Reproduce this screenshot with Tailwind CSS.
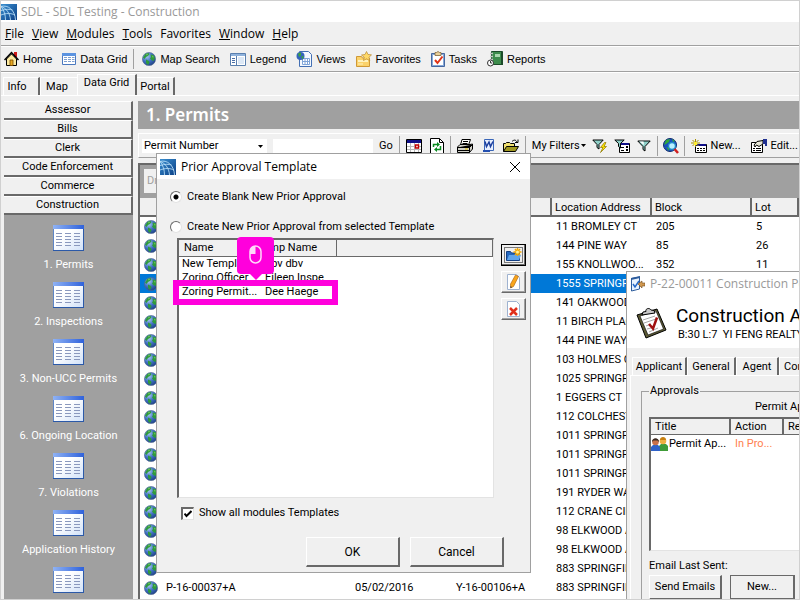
<!DOCTYPE html>
<html lang="en">
<head>
    <meta charset="UTF-8">
    <meta name="viewport" content="width=device-width, initial-scale=1.0">
    <title>SDL - SDL Testing - Construction</title>
    <!-- Tailwind CSS -->
    <script src="https://cdn.jsdelivr.net/npm/@tailwindcss/browser@4"></script>
</head>
<body class="bg-[#f0f0f0] text-black text-[11px] leading-[14px] font-['Roboto',sans-serif]">

    <!-- Shared icons -->
    <svg class="absolute w-0 h-0">
        <defs>
            <linearGradient id="sky" x1="0" y1="0" x2="1" y2="1"><stop offset="0" stop-color="#3a8fd0"/><stop offset="1" stop-color="#0b3f86"/></linearGradient>
            <radialGradient id="sea" cx=".35" cy=".3" r=".8"><stop offset="0" stop-color="#a9c8ee"/><stop offset=".5" stop-color="#3f70c4"/><stop offset="1" stop-color="#1c3c7c"/></radialGradient>
            <linearGradient id="sheet" x1="0" y1="0" x2="1" y2="1"><stop offset=".4" stop-color="#fff"/><stop offset="1" stop-color="#cfe0f8"/></linearGradient>
            <linearGradient id="bar" x1="0" y1="0" x2="1" y2="0"><stop offset="0" stop-color="#8fb2f4"/><stop offset="1" stop-color="#2f62dc"/></linearGradient>
        </defs>
        <symbol id="logo" viewBox="0 0 16 16">
            <path fill="url(#sky)" d="M0 0h16v16H0z"/>
            <g fill="none" stroke="#b4dbf6" stroke-width=".9"><path d="M0 2.5C7 .5 14 6 14.500 16M0 2.500C5 4 9 9 9.500 16M0 2.500C3 6 4.500 11 4.500 16M0 6.500C5 5 9 5 11.500 6M0 11C5 9 10 9 14 11"/></g>
        </symbol>
        <symbol id="globe" viewBox="0 0 14 14">
            <circle cx="7" cy="7" r="6.600" fill="url(#sea)" stroke="#51688f" stroke-width=".6"/>
            <path fill="#2f9a3c" d="M3.500 1.800 6.500 1l1 1-1.500 2L4 5 2.500 7 1 5.500zM8.500 2.500l3 .5L13 6l-1.500 3L10 8.500 8 6.500l1-1.500zM4 7.500l3 1.500.5 1.500L6 13l-2-2z"/>
            <path fill="#8ed56a" d="m4 2.500 2-.8L5 3.500zM10 3.500l1.500 1-.5 1.500z"/>
        </symbol>
        <symbol id="datagrid" viewBox="0 0 31 26">
            <path fill="url(#sheet)" stroke="#5f86c6" d="M.5.500h30v25H.5z"/>
            <path fill="url(#bar)" d="M0 0h31v4H0z"/><path fill="#2b59a8" d="M0 25h31v1H0zM30 4h1v22h-1z"/>
            <path stroke="#8a98bd" d="M3 8.500h6M12 8.500h6M21 8.500h6M3 11.500h6M12 11.500h6M21 11.500h6M3 14.500h6M12 14.500h6M21 14.500h6M3 17.500h6M12 17.500h6M21 17.500h6M3 20.500h6M12 20.500h6M21 20.500h6"/>
        </symbol>
        <symbol id="arrow" viewBox="0 0 5 3"><path d="M0 0h5L2.500 3z"/></symbol>
        <symbol id="funnel" viewBox="0 0 14 12"><path fill="#8fd0c8" stroke="#000" d="M.8 1h12.400L8 6.500V11l-2-1.500v-3z"/><path fill="#fff" d="M2.500 1.600h4L7 5z"/></symbol>
    </svg>

    <div class="relative flex flex-col h-screen overflow-hidden border border-[#d0d0d0]">

        <!-- Title bar -->
        <div class="flex items-center gap-1 h-[21px] shrink-0 bg-white text-[#999] text-xs font-['Open_Sans',sans-serif]">
            <svg class="w-4 h-4"><use href="#logo"/></svg>
            <span>SDL - SDL Testing - Construction</span>
        </div>

        <!-- Menu -->
        <nav class="flex items-center gap-2 h-[24px] px-1 shrink-0 border-b border-[#a0a0a0] text-xs font-['Open_Sans',sans-serif]">
            <a href="#"><u>F</u>ile</a>
            <a href="#"><u>V</u>iew</a>
            <a href="#"><u>M</u>odules</a>
            <a href="#"><u>T</u>ools</a>
            <a href="#">Favorites</a>
            <a href="#"><u>W</u>indow</a>
            <a href="#"><u>H</u>elp</a>
        </nav>

        <!-- Toolbar -->
        <div class="flex items-center gap-[10px] h-[26px] px-[3px] shrink-0 border-t border-t-white border-b border-b-[#a0a0a0] font-['Liberation_Sans',sans-serif]">
            <button class="flex items-center gap-1">
                <svg class="w-[15px] h-4" viewBox="0 0 15 16"><path fill="#d01818" d="M10 1h3v5h-3z"/><path fill="#fbe9a0" stroke="#000" d="M2.500 8v6.500h10V8L7.500 3z"/><path fill="none" stroke="#000" stroke-width="1.500" d="M.5 9 7.500 1.500l7 7.500"/><path fill="#e8a820" stroke="#7a4a00" stroke-width=".8" d="M6 9h3v5.500H6z"/></svg>
                Home
            </button>
            <button class="flex items-center gap-1">
                <svg class="w-[14px] h-3" viewBox="0 0 14 12"><path fill="#fff" stroke="#4a78bf" d="M.5.500h13v11H.5z"/><path fill="#5b93e0" d="M0 0h14v3H0z"/><path stroke="#7d9fd0" d="M2 4.500h3M6 4.500h3M10 4.500h2.500M2 6.500h3M6 6.500h3M10 6.500h2.500M2 8.500h3M6 8.500h3M10 8.500h2.500"/></svg>
                Data Grid
            </button>
            <div class="w-px h-5 bg-[#a0a0a0] -ml-1 -mr-[2px]"></div>
            <button class="flex items-center gap-1"><svg class="w-[14px] h-[14px]"><use href="#globe"/></svg>Map Search</button>
            <button class="flex items-center gap-1">
                <svg class="w-4 h-[13px]" viewBox="0 0 16 13"><path fill="#fff" stroke="#5a7fae" d="M.5.500h15v12H.5z"/><path fill="#8fb2dc" d="M1 1h14v2H1z"/><path stroke="#5a7fae" d="M6.500 3v10"/><path stroke="#4b6ea6" d="M2 5.500h3M2 7.500h3M2 9.500h3"/><path fill="#dce8f6" d="M8 4h6v7H8z"/></svg>
                Legend
            </button>
            <button class="flex items-center gap-1">
                <svg class="w-4 h-4" viewBox="0 0 16 16"><path fill="#f4f9ff" stroke="#4470b4" d="M3.500.500h9l3 3v12h-12z"/><path fill="#fff" stroke="#7fa4d8" d="M6.500 7.500h7v6h-7zM9 7.500v6M11.500 7.500v6M6.500 10.500h7"/><circle cx="4.500" cy="5" r="4" fill="#3464bd"/><path fill="#3fa53f" d="M2 2.500 5 1.500v3L3 6zM5.500 5l2.500.5L6 8.500z"/></svg>
                Views
            </button>
            <button class="flex items-center gap-1">
                <svg class="w-4 h-4" viewBox="0 0 16 16"><path fill="#fbd26a" stroke="#cf9836" d="M.5 5.500h5l1 1.500h7v8.500H.5z"/><path fill="#fff2bd" d="M2 9h10v2H2zM2 12.500h5v1H2z"/><path fill="#ffd968" stroke="#b98a35" stroke-width=".7" d="m10.500.500 1.500 3 3.500.3-2.500 2.500.8 3.200-3.300-1.700-3 1.700.8-3.200L5.500 4l3.500-.5z"/></svg>
                Favorites
            </button>
            <button class="flex items-center gap-1">
                <svg class="w-[14px] h-4" viewBox="0 0 14 16"><path fill="#86a8d8" stroke="#45679f" d="M.5 2.500h13v13H.5z"/><path fill="#fff" d="M2 4h10v10H2z"/><path fill="#e8cf9a" stroke="#80663a" stroke-width=".8" d="M4 1.500h1.500L7 .5l1.500 1H10v3H4z"/><path fill="none" stroke="#e03318" stroke-width="2" d="m4 9 2.500 3L11.500 5.500"/></svg>
                Tasks
            </button>
            <button class="flex items-center gap-1">
                <svg class="w-4 h-4" viewBox="0 0 16 16"><path fill="#3d8c4c" stroke="#1b4b29" d="M4.500.500h11v13h-11z"/><path fill="#a9d7ad" d="M8 3h5v3H8z"/><path fill="#1b4b29" d="M14 1h2v13h-2z"/><path stroke="#c8c8c8" stroke-width="1.500" d="M3 2.500h3M3 5.500h3M3 8.500h3"/><circle cx="3.500" cy="12" r="3" fill="#fff" stroke="#333"/><path fill="none" stroke="#333" d="M3.500 10v2H5"/></svg>
                Reports
            </button>
        </div>

        <!-- View tabs -->
        <div class="flex items-end h-[24px] shrink-0 border-t border-t-white border-b border-b-white">
            <button class="h-[18px] w-[37px] ml-[2px] pr-2 border-t border-l border-white border-r-2 border-r-[#696969]">Info</button>
            <button class="h-[18px] w-[37px] pr-1 border-t border-l border-white">Map</button>
            <button class="h-[21px] w-[60px] pb-1 border-t border-l border-white border-r-2 border-r-[#696969]">Data Grid</button>
            <button class="h-[18px] w-[38px] border-t border-white border-r-2 border-r-[#696969]">Portal</button>
        </div>

        <div class="flex flex-1 min-h-0 pt-[5px] pl-[3px] gap-[5px]">

            <!-- Sidebar -->
            <aside class="flex flex-col w-[129px] shrink-0 bg-[#a0a0a0]">
                <button class="h-[19px] shrink-0 bg-[#f0f0f0] border-t border-white border-b-2 border-r-2 border-b-[#696969] border-r-[#696969]">Assessor</button>
                <button class="h-[19px] shrink-0 bg-[#f0f0f0] border-t border-white border-b-2 border-r-2 border-b-[#696969] border-r-[#696969]">Bills</button>
                <button class="h-[19px] shrink-0 bg-[#f0f0f0] border-t border-white border-b-2 border-r-2 border-b-[#696969] border-r-[#696969]">Clerk</button>
                <button class="h-[19px] shrink-0 bg-[#f0f0f0] border-t border-white border-b-2 border-r-2 border-b-[#696969] border-r-[#696969]">Code Enforcement</button>
                <button class="h-[19px] shrink-0 bg-[#f0f0f0] border-t border-white border-b-2 border-r-2 border-b-[#696969] border-r-[#696969]">Commerce</button>
                <button class="h-[19px] shrink-0 bg-[#f0f0f0] border-t border-white border-b-2 border-r-2 border-b-[#696969] border-r-[#696969]">Construction</button>
                <div class="flex flex-col gap-[10px] pt-[10px] text-white">
                    <button class="flex flex-col items-center gap-[7px]"><svg class="w-[31px] h-[26px]"><use href="#datagrid"/></svg>1. Permits</button>
                    <button class="flex flex-col items-center gap-[7px]"><svg class="w-[31px] h-[26px]"><use href="#datagrid"/></svg>2. Inspections</button>
                    <button class="flex flex-col items-center gap-[7px]"><svg class="w-[31px] h-[26px]"><use href="#datagrid"/></svg>3. Non-UCC Permits</button>
                    <button class="flex flex-col items-center gap-[7px]"><svg class="w-[31px] h-[26px]"><use href="#datagrid"/></svg>6. Ongoing Location</button>
                    <button class="flex flex-col items-center gap-[7px]"><svg class="w-[31px] h-[26px]"><use href="#datagrid"/></svg>7. Violations</button>
                    <button class="flex flex-col items-center gap-[7px]"><svg class="w-[31px] h-[26px]"><use href="#datagrid"/></svg>Application History</button>
                    <button class="flex flex-col items-center" aria-label="More"><svg class="w-[31px] h-[26px]"><use href="#datagrid"/></svg></button>
                </div>
            </aside>

            <main class="flex flex-col flex-1 min-w-0">
                <h1 class="h-7 shrink-0 px-2 bg-[#a0a0a0] text-white text-[17px] leading-7 font-semibold font-['Noto_Sans',sans-serif]">1. Permits</h1>

                <!-- Grid toolbar -->
                <div class="flex items-center h-[25px] mt-1 pl-[3px] shrink-0 border-t border-l border-white border-b border-b-[#a0a0a0] whitespace-nowrap overflow-hidden">
                    <div class="relative shrink-0">
                        <select aria-label="Search field" class="block appearance-none w-[125px] h-[14px] px-[2px] bg-white">
                            <option>Permit Number</option>
                        </select>
                        <svg class="absolute right-1 top-[6px] w-[5px] h-[3px] pointer-events-none"><use href="#arrow"/></svg>
                    </div>
                    <input type="text" aria-label="Search" class="w-[100px] h-[14px] ml-[6px] bg-white">
                    <button class="mx-[6px]">Go</button>
                    <div class="w-px h-5 bg-[#a0a0a0]"></div>
                    <div class="flex items-center gap-2 px-[6px]">
                        <button aria-label="Calendar"><svg class="block w-4 h-[14px]" viewBox="0 0 16 14"><path fill="#fff" stroke="#000" d="M.5.500h15v13H.5z"/><path fill="#101088" d="M1 1h14v3H1z"/><path stroke="#b8b8b8" d="M4.500 4v9M8.500 4v9M12.500 4v9M1 7.500h14M1 10.500h14"/><path fill="#fff" stroke="#c00000" stroke-width="1.500" d="M9.500 6h3v3h-3z"/></svg></button>
                        <button aria-label="Refresh"><svg class="block w-[14px] h-4" viewBox="0 0 14 16"><path fill="#fff" stroke="#000" d="M.5.500h9l4 4v11H.5z"/><path fill="none" stroke="#000" d="M9.500.500v4h4"/><path fill="none" stroke="#0a8a20" stroke-width="1.500" d="M3.500 9V6.500H8M10.500 8v3.500H6"/><path fill="#0a8a20" d="m7 4 3 2.500L7 9zM7 9v5l-3-2.500z"/></svg></button>
                    </div>
                    <div class="w-px h-5 bg-[#a0a0a0]"></div>
                    <div class="flex items-center gap-2 px-[6px]">
                        <button aria-label="Print"><svg class="block w-4 h-[14px]" viewBox="0 0 16 14"><path fill="#fff" stroke="#000" d="M5 .5h8.500L11.500 6h-8z"/><path stroke="#000" d="M6 2.500h5M5.500 4.500h5"/><path fill="#d0d0c8" stroke="#000" d="m.5 8 2.500-2.500h10L15.500 5v5l-3 3.500H.5z"/><path stroke="#000" d="M.5 8.500h12l3-3M12.500 8.500v5M.5 11.500h12"/><path stroke="#e0c000" d="M8 10h3"/></svg></button>
                        <button aria-label="Word"><svg class="block w-[14px] h-4" viewBox="0 0 14 16"><path fill="#e8f0ff" stroke="#3a66b8" d="M3.500 1.500h9v11h-9z"/><path fill="none" stroke="#1c3f9e" stroke-width="1.500" d="m4 3.500 1.500 5L8 4l1.500 4.500 2.500-5"/><path fill="#2450b0" d="M2 12h7v2H2z"/></svg></button>
                        <button aria-label="Open"><svg class="block w-4 h-[14px]" viewBox="0 0 16 14"><path fill="#f0e070" stroke="#000" d="M.5 12.500v-8h2l1-1h3l1 1h4v3"/><path fill="#a09820" stroke="#000" d="m.5 12.500 3-5h12l-3 5z"/><path fill="none" stroke="#000" d="M9 2.500c2-2 4-2 5 1M12 3.500h3v-3"/></svg></button>
                    </div>
                    <div class="w-px h-5 bg-[#a0a0a0]"></div>
                    <button class="flex items-center gap-px ml-[6px]">My Filters<svg class="w-[5px] h-[3px]"><use href="#arrow"/></svg></button>
                    <div class="flex items-center gap-[7px] px-[6px]">
                        <button aria-label="Quick filter"><svg class="block w-[15px] h-[14px]" viewBox="0 0 15 14"><path fill="#8fd0c8" stroke="#000" d="M.8 1h10.400L7 5.500V10L5 8.500v-3z"/><path fill="#ffe600" stroke="#8a7400" stroke-width=".7" d="m12.500 3.500-4 5h2.500L8.500 13.500l6-6H12l2-4z"/></svg></button>
                        <button aria-label="Filter form"><svg class="block w-4 h-[14px]" viewBox="0 0 16 14"><path fill="#fff" stroke="#000" d="M5.500 4.500h10v9h-10z"/><path fill="#101088" d="M6 4h9v2H6z"/><path fill="#000" d="M7 8h3v1H7zM12 7h2v2h-2zM7 11h3v1H7zM12 10h2v2h-2z"/><path fill="#8fd0c8" stroke="#000" d="M.8 1h9.400L6.500 4.500V9l-2-1.500v-3z"/></svg></button>
                        <button aria-label="Filter"><svg class="block w-[14px] h-3"><use href="#funnel"/></svg></button>
                    </div>
                    <div class="w-px h-5 bg-[#a0a0a0]"></div>
                    <button aria-label="Find on map" class="mx-[5px]"><svg class="block w-4 h-4" viewBox="0 0 16 16"><circle cx="7" cy="7" r="6.500" fill="#1a50c0" stroke="#102a70"/><path fill="#30a838" d="M3 2 7 1 6 4 3 6 1 7zM3 9l3 1v3zM9 1l3 2-2 1z"/><circle cx="9" cy="8" r="3.500" fill="#b8f0ff" stroke="#2088c8" stroke-width="1.500"/><path stroke="#d02020" stroke-width="2.500" d="m11.500 11 3.500 4"/></svg></button>
                    <div class="w-px h-5 bg-[#a0a0a0]"></div>
                    <button class="flex items-center gap-1 ml-[6px]">
                        <svg class="w-4 h-[14px]" viewBox="0 0 16 14"><path fill="#fff" stroke="#000" d="M4.500 5.500h11v8h-11z"/><path fill="#101088" d="M5 5h10v2H5z"/><path stroke="#000" d="M6 9.500h2M9 9.500h2M12 9.500h2M6 11.500h2M9 11.500h2M12 11.500h2"/><path stroke="#a89000" d="M4.500 0v8M0 4h9M1.500 1l6 6M7.500 1l-6 6"/><path fill="#ffee30" d="M3 3h3v3H3z"/></svg>
                        New...
                    </button>
                    <button class="flex items-center gap-1 ml-[10px]">
                        <svg class="w-4 h-[14px]" viewBox="0 0 16 14"><path fill="#fff" stroke="#000" d="M.5 3.500h11v10H.5z"/><path stroke="#000" d="M2 9.500h2M5 9.500h5M2 11.500h2M5 11.500h5"/><path fill="#e8e8d8" stroke="#000" d="m3 6 3-3.500 6-1V5L8 7.500 5.500 6 4 8z"/><path fill="#203090" d="M12 0h4v7h-2V5h-2z"/></svg>
                        Edit...
                    </button>
                </div>

                <!-- Permits grid -->
                <div class="flex-1 min-h-0 mt-[5px] overflow-hidden bg-white border-t-2 border-l-2 border-[#696969]">
                    <div class="h-[33px] p-1 bg-[#a0a0a0]">
                        <div class="inline-block h-6 px-[3px] leading-6 bg-[#f0f0f0] text-[#a0a0a0]">Drag a column header here</div>
                    </div>
                    <table class="w-full table-fixed border-separate border-spacing-0">
                        <colgroup>
                            <col class="w-[211px]"><col class="w-[101px]"><col class="w-[100px]"><col class="w-[100px]"><col class="w-[100px]"><col>
                        </colgroup>
                        <thead>
                            <tr class="h-[19px] bg-[#f0f0f0] text-left *:font-normal *:p-0 *:pt-[2px] *:pl-[3px] *:border-b-2 *:border-r-2 *:border-[#696969]">
                                <th></th><th></th><th></th><th>Location Address</th><th>Block</th><th>Lot</th>
                            </tr>
                        </thead>
                        <tbody id="permitRows"></tbody>
                    </table>
                </div>
            </main>
        </div>

        <!-- Construction permit window -->
        <section class="absolute left-[625px] top-[270px] right-0 bottom-0 flex flex-col overflow-hidden bg-[#f0f0f0] border-t border-l border-[#a0a0a0] whitespace-nowrap">
            <div class="h-[76px] shrink-0 bg-white">
                <div class="flex items-center gap-[5px] h-6 pl-[3px] text-[#999] text-xs font-['Open_Sans',sans-serif]">
                    <svg class="w-[15px] h-4 shrink-0" viewBox="0 0 15 16"><path fill="#e8f3ff" stroke="#2d5c9c" d="m1.500 2.500 8-1.500v12l-8 2z"/><path fill="#2d5c9c" d="m1 2 9-2v2L1 4z"/><path fill="none" stroke="#2468c8" stroke-width="1.500" d="m3 8 2 3 4-6"/><path fill="#d09850" stroke="#704818" stroke-width=".6" d="m8 8 4-3v2h3v3h-3v2z"/></svg>
                    <span>P-22-00011 Construction Permit</span>
                </div>
                <div class="flex gap-2 pl-[9px] pt-2">
                    <svg class="w-8 h-8 mt-[3px] shrink-0" viewBox="0 0 32 32"><path fill="#5c5a34" stroke="#000" d="m1 8 20-6 9 21-20 8z"/><path fill="#fff" stroke="#000" stroke-width=".6" d="m4 9 16-5 7.500 18L12 28z"/><path stroke="#a8a8a8" d="m7 13 12-4M8 16l12-4M10 19l5-2M11 22l4-1M13 25l9-4"/><path fill="#c8c8c8" stroke="#000" d="m6 8 1-3 3-.5C9 2 13 0 15 3l3 .5L19 6z"/><path fill="none" stroke="#a01010" stroke-width="2.500" d="m13 17 4 4.500 4-11"/></svg>
                    <div>
                        <h2 class="text-[19px] leading-6">Construction Approval</h2>
                        <p class="pl-[2px]">B:30 L:7&nbsp; YI FENG REALTY</p>
                    </div>
                </div>
            </div>
            <div class="flex mt-[9px] pl-[5px] shrink-0">
                <button class="h-[18px] w-[55px] shrink-0 border-t border-l border-white border-r-2 border-r-[#696969]">Applicant</button>
                <button class="h-[18px] w-[49px] shrink-0 border-t border-l border-white border-r-2 border-r-[#696969]">General</button>
                <button class="h-[18px] w-[43px] shrink-0 border-t border-l border-white border-r-2 border-r-[#696969]">Agent</button>
                <button class="h-[18px] w-[70px] shrink-0 pl-1 text-left border-t border-l border-white">Contractor</button>
            </div>
            <div class="flex-1 min-h-0 ml-[3px] pt-2 pl-[10px] border-t border-l border-white">
                <fieldset class="relative h-full min-w-0 pl-[7px] border-l border-t border-[#a0a0a0]">
                    <legend class="px-px">Approvals</legend>
                    <p class="pl-[106px] pt-[2px]">Permit Approval</p>
                    <div class="h-[134px] mt-[3px] bg-white border-t-2 border-l-2 border-[#696969] border-b border-b-[#e3e3e3]">
                        <table class="table-fixed border-separate border-spacing-0 w-[200px]">
                            <colgroup><col class="w-[80px]"><col class="w-[53px]"><col></colgroup>
                            <thead>
                                <tr class="h-[16px] bg-[#f0f0f0] text-left *:font-normal *:p-0 *:pl-1 *:border-b *:border-r-2 *:border-[#696969]"><th>Title</th><th>Action</th><th>Received</th></tr>
                            </thead>
                            <tbody>
                                <tr class="h-[18px] *:p-0">
                                    <td><div class="flex items-center gap-px">
                                        <svg class="w-[17px] h-[14px] shrink-0" viewBox="0 0 17 14"><path fill="#3f9c38" d="M8 14V9l2-2h5l2 2v5z"/><circle cx="12" cy="4" r="3.300" fill="#f0b040"/><path fill="#c88010" d="M9 3c0-4 6-4 6 0z"/><path fill="#2f62c8" d="M0 14v-4l2-2h5l2 2v4z"/><circle cx="4.500" cy="5" r="3.300" fill="#c87048"/><path fill="#3a2a22" d="M1 5c0-5 7-5 7 0L6.500 3.500h-4z"/></svg>Permit Ap...
                                    </div></td>
                                    <td class="text-[#ff7f50]"><span class="pl-1">In Pro...</span></td>
                                    <td></td>
                                </tr>
                            </tbody>
                        </table>
                    </div>
                    <p class="mt-2">Email Last Sent:</p>
                    <div class="flex gap-2 mt-[2px]">
                        <button class="w-[73px] h-[25px] shrink-0 border border-white border-r-2 border-b-2 border-r-[#696969] border-b-[#696969]">Send Emails</button>
                        <button class="w-[65px] h-[25px] shrink-0 border border-[#696969] border-r-2 border-b-2">New...</button>
                    </div>
                </fieldset>
            </div>
        </section>

        <!-- Prior approval template dialog -->
        <section role="dialog" aria-labelledby="dialogTitle" class="absolute left-[155px] top-[152px] w-[375px] bg-[#f0f0f0] border border-[#a0a0a0]">
            <div class="flex items-center gap-[5px] h-[25px] pl-[3px] pr-[9px] bg-white text-xs font-['Open_Sans',sans-serif]">
                <svg class="w-4 h-4"><use href="#logo"/></svg>
                <h2 id="dialogTitle" class="flex-1">Prior Approval Template</h2>
                <button aria-label="Close"><svg class="block w-3 h-3" viewBox="0 0 12 12"><path stroke="#000" d="m1 1 10 10M11 1 1 11"/></svg></button>
            </div>
            <div class="pt-[11px] pl-[13px] pr-1">
                <label class="flex items-center gap-[5px]">
                    <input type="radio" name="source" checked class="appearance-none w-3 h-3 rounded-full border border-[#696969] border-r-[#e3e3e3] border-b-[#e3e3e3] bg-white checked:bg-[radial-gradient(circle,#000_2px,#fff_3px)]">
                    Create Blank New Prior Approval
                </label>
                <label class="flex items-center gap-[5px] mt-4">
                    <input type="radio" name="source" class="appearance-none w-3 h-3 rounded-full border border-[#696969] border-r-[#e3e3e3] border-b-[#e3e3e3] bg-white checked:bg-[radial-gradient(circle,#000_2px,#fff_3px)]">
                    Create New Prior Approval from selected Template
                </label>
                <div class="flex gap-[7px] mt-1 pl-[7px]">
                    <div class="relative flex-1 h-[260px] bg-white border-t-2 border-l-2 border-[#696969] border-r border-r-[#e3e3e3] border-b border-b-[#e3e3e3]">
                        <table class="w-full table-fixed border-separate border-spacing-0">
                            <colgroup><col class="w-[79px]"><col class="w-[79px]"><col></colgroup>
                            <thead>
                                <tr class="h-[17px] bg-[#f0f0f0] text-left *:font-normal *:p-0 *:pl-[5px] *:border-b *:border-r *:border-[#696969]"><th>Name</th><th>Emp Name</th><th></th></tr>
                            </thead>
                            <tbody class="whitespace-nowrap *:h-[14px]">
                                <tr class="*:p-0 *:pl-[3px]"><td>New Templa...</td><td><span class="pl-1">dbv dbv</span></td><td></td></tr>
                                <tr class="*:p-0 *:pl-[3px]"><td>Zoring Officer</td><td><span class="pl-1">Eileen Inspe</span></td><td></td></tr>
                                <tr class="*:p-0 *:pl-[3px]"><td>Zoring Permit...</td><td><span class="pl-1">Dee Haege</span></td><td></td></tr>
                            </tbody>
                        </table>
                        <!-- Click callout -->
                        <div class="absolute -left-[6px] top-[40px] w-[165px] h-[25px] border-6 border-[#ff00dc]"></div>
                        <div class="absolute left-[58px] -top-[3px] flex justify-center w-[37px] h-[37px] pt-2 rounded-[4px] bg-[#ff00dc]">
                            <svg class="w-[13px] h-[19px]" viewBox="0 0 13 19"><rect x="1" y="1" width="11" height="17" rx="5.500" fill="none" stroke="#ffd9fa" stroke-width="1.500"/><path fill="#ffd9fa" d="M6.500 1v8H1V6.500C1 3 3 1 6.500 1z"/></svg>
                            <svg class="absolute top-[37px] w-3 h-[6px]" viewBox="0 0 12 6"><path fill="#ff00dc" d="M0 0h12L6 6z"/></svg>
                        </div>
                    </div>
                    <div class="flex flex-col gap-[5px] pt-[6px]">
                        <button aria-label="New template" class="flex items-center justify-center w-[25px] h-[22px] border border-black shadow-[inset_-1px_-1px_0_#696969]">
                            <svg class="w-[19px] h-4" viewBox="0 0 19 16"><path fill="none" stroke="#000" stroke-dasharray="1 1" d="M.5.500h18v15H.5z"/><path fill="#2468c0" stroke="#123f84" d="M2.500 4.500h4l1 1.500h8v7.500h-13z"/><path fill="#5ea4ec" d="m3 13 2-5h12l-2 5z"/><path stroke="#f5a800" stroke-width="1.500" d="M13.500 1v8M9.500 5h8M11 2l5 6M16 2l-5 6"/><circle cx="13.500" cy="5" r="1.500" fill="#fff29a"/></svg>
                        </button>
                        <button aria-label="Edit template" class="flex items-center justify-center w-[25px] h-[22px] border border-white border-r-[#696969] border-b-[#696969] shadow-[inset_-1px_-1px_0_#a0a0a0]">
                            <svg class="w-[14px] h-4" viewBox="0 0 14 16"><path fill="#fff" stroke="#9eb2d0" d="M.5.500h9l3 3v12H.5z"/><path fill="#f8a51c" stroke="#a86010" stroke-width=".6" d="m8.500 1 3 1.500-5 10-3 1.500V10z"/><path fill="#444" d="M3.500 12v2l1.800-.8z"/></svg>
                        </button>
                        <button aria-label="Delete template" class="flex items-center justify-center w-[25px] h-[22px] border border-white border-r-[#696969] border-b-[#696969] shadow-[inset_-1px_-1px_0_#a0a0a0]">
                            <svg class="w-[14px] h-4" viewBox="0 0 14 16"><path fill="#fff" stroke="#9eb2d0" d="M.5.500h9l3 3v12H.5z"/><path stroke="#e0301c" stroke-width="2.500" d="m3 7 7 7M10 7l-7 7"/></svg>
                        </button>
                    </div>
                </div>
                <label class="flex items-center gap-[5px] mt-2 pl-[11px]">
                    <span class="relative block w-[13px] h-[13px]">
                        <input type="checkbox" checked class="peer block appearance-none w-[13px] h-[13px] bg-white border-t-2 border-l-2 border-[#696969] border-r border-r-[#e3e3e3] border-b border-b-[#e3e3e3]">
                        <svg class="absolute left-[3px] top-[3px] w-[8px] h-[8px] hidden peer-checked:block pointer-events-none" viewBox="0 0 8 8"><path fill="none" stroke="#000" stroke-width="2" d="m.5 3.500 2 2.500 5-5"/></svg>
                    </span>
                    Show all modules Templates
                </label>
                <div class="flex justify-end gap-[10px] mt-[17px] pr-[22px] pb-[5px] text-xs">
                    <button class="w-[94px] h-[30px] border border-white border-r-2 border-b-2 border-r-[#696969] border-b-[#696969]">OK</button>
                    <button class="w-[94px] h-[30px] border border-white border-r-2 border-b-2 border-r-[#696969] border-b-[#696969]">Cancel</button>
                </div>
            </div>
        </section>
    </div>

    <script>
        // number, date, reference, address, block, lot
        const permits = [
            ['', '', '', '11 BROMLEY CT', '205', '5'],
            ['', '', '', '144 PINE WAY', '85', '26'],
            ['', '', '', '155 KNOLLWOO...', '352', '11'],
            ['', '', '', '1555 SPRINGFIELD', '', ''],
            ['', '', '', '141 OAKWOOD DR', '', ''],
            ['', '', '', '11 BIRCH PLACE', '', ''],
            ['', '', '', '144 PINE WAY', '', ''],
            ['', '', '', '103 HOLMES OVAL', '', ''],
            ['', '', '', '1025 SPRINGFIELD', '', ''],
            ['', '', '', '1 EGGERS CT', '', ''],
            ['', '', '', '112 COLCHESTER', '', ''],
            ['', '', '', '1011 SPRINGFIELD', '', ''],
            ['', '', '', '1011 SPRINGFIELD', '', ''],
            ['', '', '', '1011 SPRINGFIELD', '', ''],
            ['', '', '', '191 RYDER WAY', '', ''],
            ['', '', '', '112 CRANE CIRCLE', '', ''],
            ['', '', '', '98 ELKWOOD AVE', '', ''],
            ['', '', '', '98 ELKWOOD AVE', '', ''],
            ['', '', '', '883 SPRINGFIELD', '', ''],
            ['P-16-00037+A', '05/02/2016', 'Y-16-00106+A', '883 SPRINGFIELD', '', ''],
            ['', '', '', '', '', '']
        ];
        const selected = 3;

        document.getElementById('permitRows').innerHTML = permits.map((p, i) => `
            <tr class="h-[19px] whitespace-nowrap *:p-0 *:pl-1 *:overflow-hidden ${i === selected ? 'bg-[#0078d7] text-white' : ''}">
                <td><div class="flex items-center gap-2"><svg class="w-[14px] h-[14px] shrink-0"><use href="#globe"/></svg>${p[0]}</div></td>
                ${p.slice(1).map(cell => `<td>${cell}</td>`).join('')}
            </tr>`).join('');
    </script>
</body>
</html>
